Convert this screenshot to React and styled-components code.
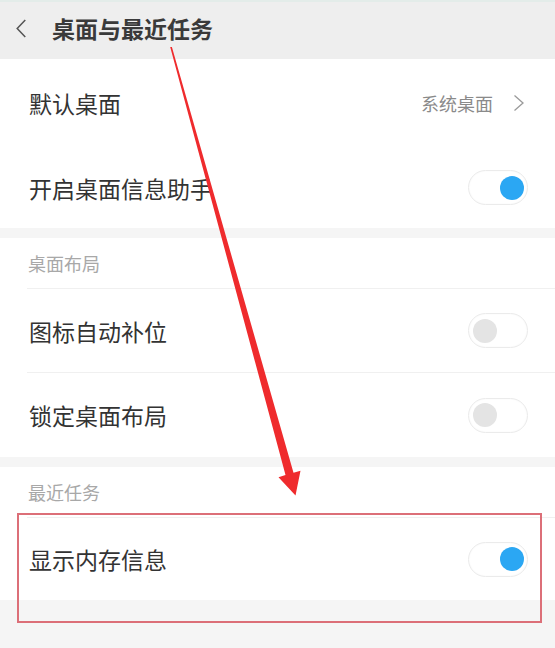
import React from "react";
import styled, { createGlobalStyle } from "styled-components";

const GlobalStyle = createGlobalStyle`
  html, body {
    margin: 0;
    padding: 0;
    background: #f5f5f5;
  }
  body {
    font-family: "Noto Sans CJK SC", "Noto Sans", sans-serif;
  }
`;

const sections = [
  {
    id: "main",
    rows: [
      { label: "默认桌面", value: "系统桌面", height: 88 },
      { label: "开启桌面信息助手", toggle: true, on: true, height: 81 },
    ],
  },
  {
    id: "layout",
    title: "桌面布局",
    rows: [
      { label: "图标自动补位", toggle: true, on: false, height: 84 },
      { label: "锁定桌面布局", toggle: true, on: false, height: 85 },
    ],
  },
  {
    id: "recent",
    title: "最近任务",
    rows: [{ label: "显示内存信息", toggle: true, on: true, height: 83 }],
  },
];

export default function App() {
  return (
    <Page>
      <GlobalStyle />
      <TopStrip />
      <Header>
        <BackIcon viewBox="0 0 12 20">
          <path d="M10.5 1 L2 10 L10.5 19" fill="none" stroke="#555" strokeWidth="1.6" />
        </BackIcon>
        <Title>桌面与最近任务</Title>
      </Header>

      {sections.map((section) => (
        <Section key={section.id}>
          {section.title && <SectionTitle>{section.title}</SectionTitle>}
          {section.rows.map((row) => (
            <Row key={row.label} $height={row.height} $divider={!!section.title}>
              <Label>{row.label}</Label>
              {row.value && (
                <ValueWrap>
                  <Value>{row.value}</Value>
                  <Chevron viewBox="0 0 12 18">
                    <path d="M1.5 1.5 L10 9 L1.5 16.5" fill="none" stroke="#9a9a9a" strokeWidth="1.3" />
                  </Chevron>
                </ValueWrap>
              )}
              {row.toggle && (
                <Switch $on={row.on}>
                  <Knob $on={row.on} />
                </Switch>
              )}
            </Row>
          ))}
        </Section>
      ))}

      <Highlight />
      <ArrowLayer viewBox="0 0 555 648">
        <polygon
          fill="#ef2b2d"
          points="170.2,47 171.9,47 293.5,472.8 300.5,470.8 295.5,495.5 278.5,477.2 285.5,475"
        />
      </ArrowLayer>
    </Page>
  );
}

const Page = styled.div`
  position: relative;
  width: 555px;
  height: 648px;
  overflow: hidden;
  background: #f5f5f5;
`;

const TopStrip = styled.div`
  height: 2px;
  background: #e3ece9;
`;

const Header = styled.div`
  height: 57px;
  display: flex;
  align-items: center;
  background: #eeeeee;
  padding-left: 15px;
`;

const BackIcon = styled.svg`
  width: 12px;
  height: 19px;
  margin-right: 25px;
  margin-top: -4px;
`;

const Title = styled.div`
  font-size: 23px;
  font-weight: 700;
  color: #3a3a3a;
  margin-top: -6px;
`;

const Section = styled.div`
  background: #ffffff;
  margin-bottom: 10px;
`;

const SectionTitle = styled.div`
  height: 50px;
  display: flex;
  align-items: center;
  padding-left: 28px;
  font-size: 18px;
  color: #a8a8a8;
`;

const Row = styled.div`
  height: ${(p) => p.$height}px;
  display: flex;
  align-items: center;
  justify-content: space-between;
  margin-left: 27px;
  padding-left: 2px;
  padding-right: 27px;
  border-top: ${(p) => (p.$divider ? "1px solid #f0f0f0" : "none")};
  box-sizing: border-box;
`;

const Label = styled.div`
  font-size: 23px;
  color: #333333;
`;

const ValueWrap = styled.div`
  display: flex;
  align-items: center;
  gap: 20px;
  margin-right: 3px;
`;

const Value = styled.div`
  font-size: 18px;
  color: #8a8a8a;
`;

const Chevron = styled.svg`
  width: 12px;
  height: 18px;
`;

const Switch = styled.div`
  position: relative;
  width: 60px;
  height: 35px;
  box-sizing: border-box;
  border: 1px solid #ebebeb;
  border-radius: 18px;
  background: #ffffff;
  box-shadow: inset 0 0 2px rgba(0, 0, 0, 0.04);
`;

const Knob = styled.div`
  position: absolute;
  top: 4.5px;
  left: ${(p) => (p.$on ? "31px" : "4px")};
  width: 24px;
  height: 24px;
  border-radius: 50%;
  background: ${(p) => (p.$on ? "#2ba7f3" : "#e4e4e4")};
`;

const Highlight = styled.div`
  position: absolute;
  left: 17px;
  top: 513px;
  width: 525px;
  height: 110px;
  box-sizing: border-box;
  border: 2px solid #dc6f78;
  pointer-events: none;
`;

const ArrowLayer = styled.svg`
  position: absolute;
  left: 0;
  top: 0;
  width: 555px;
  height: 648px;
  pointer-events: none;
`;
